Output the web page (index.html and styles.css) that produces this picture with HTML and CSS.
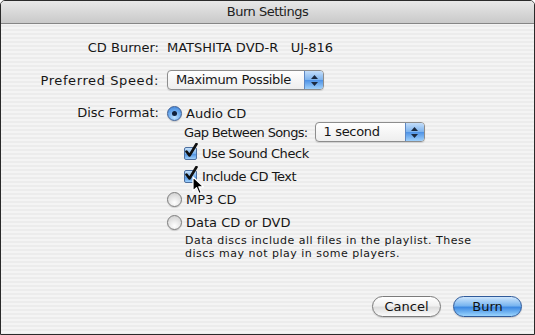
FILE: index.html
```html
<!DOCTYPE html>
<html lang="en">
<head>
    <meta charset="UTF-8">
    <meta name="viewport" content="width=device-width, initial-scale=1.0">
    <title>Burn Settings</title>
    <link rel="stylesheet" href="styles.css">
</head>
<body>
    <div class="window">
        <div class="titlebar">Burn Settings</div>

        <div class="content">
            <div class="row burner-row">
                <span class="label">CD Burner:</span>
                <span class="value">MATSHITA DVD-R   UJ-816</span>
            </div>

            <div class="row speed-row">
                <span class="label wide">Preferred Speed:</span>
                <div class="popup speed-popup">
                    <span class="popup-text">Maximum Possible</span>
                    <span class="popup-arrows">
                        <svg width="7" height="11" viewBox="0 0 7 11"><path d="M3.5 0 L7 4 L0 4 Z M0 7 L7 7 L3.5 11 Z" fill="#1b2a40"/></svg>
                    </span>
                </div>
            </div>

            <div class="row format-row">
                <span class="label">Disc Format:</span>
                <div class="options">
                    <div class="option first">
                        <span class="radio on"><span class="dot"></span></span>
                        <span>Audio CD</span>
                    </div>
                    <div class="sub">
                        <div class="gap-row">
                            <span>Gap Between Songs:</span>
                            <div class="popup gap-popup">
                                <span class="popup-text">1 second</span>
                                <span class="popup-arrows">
                                    <svg width="7" height="11" viewBox="0 0 7 11"><path d="M3.5 0 L7 4 L0 4 Z M0 7 L7 7 L3.5 11 Z" fill="#1b2a40"/></svg>
                                </span>
                            </div>
                        </div>
                        <div class="option">
                            <span class="checkbox">
                                <svg width="14" height="16" viewBox="0 0 14 16"><path d="M2.5 8.5 L5.5 12.5 L12.5 1" fill="none" stroke="#101010" stroke-width="2.6" stroke-linecap="round" stroke-linejoin="round"/></svg>
                            </span>
                            <span>Use Sound Check</span>
                        </div>
                        <div class="option cursor-row">
                            <span class="checkbox">
                                <svg width="14" height="16" viewBox="0 0 14 16"><path d="M2.5 8.5 L5.5 12.5 L12.5 1" fill="none" stroke="#101010" stroke-width="2.6" stroke-linecap="round" stroke-linejoin="round"/></svg>
                            </span>
                            <span>Include CD Text</span>
                            <svg class="cursor" width="13" height="19" viewBox="0 0 13 19"><path d="M1 1 L1 15 L4.5 11.6 L7 17.5 L9.2 16.5 L6.8 10.8 L11.5 10.8 Z" fill="#000" stroke="#fff" stroke-width="1.2" stroke-linejoin="round"/></svg>
                        </div>
                    </div>
                    <div class="option">
                        <span class="radio"></span>
                        <span>MP3 CD</span>
                    </div>
                    <div class="option">
                        <span class="radio"></span>
                        <span>Data CD or DVD</span>
                    </div>
                    <p class="note">Data discs include all files in the playlist. These<br>discs may not play in some players.</p>
                </div>
            </div>
        </div>

        <div class="buttons">
            <button class="btn">Cancel</button>
            <button class="btn default">Burn</button>
        </div>
    </div>
</body>
</html>
```

FILE: styles.css
```css
body {
    margin: 0;
    background: #fff;
    font-family: "DejaVu Sans", sans-serif;
    font-size: 13px;
    color: #161616;
}

.window {
    width: 535px;
    height: 335px;
    box-sizing: border-box;
    border: 1px solid #2a2a2a;
    border-radius: 5px 5px 0 0;
    background: repeating-linear-gradient(to bottom, #ececec 0, #ececec 2px, #f4f4f4 2px, #f4f4f4 4px);
    display: flex;
    flex-direction: column;
    overflow: hidden;
}

.titlebar {
    height: 22px;
    line-height: 22px;
    text-align: center;
    letter-spacing: -0.5px;
    background: linear-gradient(#e8e8e8, #c9c9c9);
    border-bottom: 1px solid #858585;
    color: #222;
}

.content {
    flex: 1;
    padding-top: 13px;
}

.row {
    display: flex;
    align-items: center;
    gap: 8px;
}

.label {
    width: 158px;
    flex: none;
    text-align: right;
}

.label.wide {
    letter-spacing: 0.6px;
}

.burner-row {
    height: 20px;
}

.value {
    white-space: pre;
}

.speed-row {
    margin-top: 13px;
    height: 20px;
}

.format-row {
    margin-top: 14px;
    align-items: flex-start;
}

.format-row .label {
    line-height: 18px;
}

/* popup menus */
.popup {
    display: flex;
    height: 20px;
    box-sizing: border-box;
    border: 1px solid #8d8d8d;
    border-radius: 4px;
    background: linear-gradient(#ffffff, #f6f6f6 50%, #eeeeee);
    overflow: hidden;
    box-shadow: 0 1px 1px rgba(0, 0, 0, 0.12);
}

.popup-text {
    flex: 1;
    padding-left: 8px;
    line-height: 18px;
    letter-spacing: -0.35px;
}

.popup-arrows {
    width: 18px;
    display: flex;
    align-items: center;
    justify-content: center;
    border-left: 1px solid #5e88c4;
    background: linear-gradient(#c4defa, #7fb4ee 48%, #4f93e6 52%, #9fd0fb);
}

.speed-popup {
    width: 157px;
}

.gap-popup {
    width: 110px;
}

/* options */
.options {
    display: flex;
    flex-direction: column;
}

.option {
    display: flex;
    align-items: center;
    gap: 4px;
    height: 23px;
}

.option.first {
    height: 18px;
}

.sub {
    padding-left: 17px;
    letter-spacing: -0.45px;
}

.sub .option {
    gap: 5px;
}

.gap-row {
    display: flex;
    align-items: center;
    gap: 7px;
    height: 20px;
    letter-spacing: -0.65px;
}

.radio {
    width: 15px;
    height: 15px;
    box-sizing: border-box;
    border-radius: 50%;
    border: 1px solid #7c7c7c;
    background: radial-gradient(circle at 50% 75%, #ffffff, #e0e0e0 60%, #c8c8c8);
    display: flex;
    align-items: center;
    justify-content: center;
    box-shadow: 0 1px 1px rgba(0, 0, 0, 0.15);
}

.radio.on {
    border-color: #3d5f94;
    background: radial-gradient(circle at 50% 80%, #bfe2ff, #6aa8ec 55%, #3b7fd6);
}

.dot {
    width: 5px;
    height: 5px;
    border-radius: 50%;
    background: #10203a;
}

.checkbox {
    position: relative;
    width: 13px;
    height: 13px;
    box-sizing: border-box;
    border: 1px solid #4d6f9f;
    border-radius: 2px;
    background: linear-gradient(#c8e2fb, #79b2ee 50%, #4f92e2 55%, #9fd0fb);
    flex: none;
}

.checkbox svg {
    position: absolute;
    left: -1px;
    top: -5px;
}

.cursor-row {
    position: relative;
}

.cursor {
    position: absolute;
    left: 8px;
    top: 11px;
}

.note {
    margin: 0 0 0 18px;
    font-size: 11px;
    line-height: 13px;
    letter-spacing: 0.5px;
}

/* buttons */
.buttons {
    display: flex;
    justify-content: flex-end;
    gap: 12px;
    padding: 0 12px 17px 0;
}

.btn {
    height: 21px;
    border-radius: 11px;
    border: 1px solid #7b7b7b;
    background: linear-gradient(#ffffff, #f1f1f1 45%, #dedede 55%, #fbfbfb);
    font-family: "DejaVu Sans", sans-serif;
    font-size: 13px;
    color: #111;
    padding: 0;
    width: 69px;
    box-shadow: 0 1px 1px rgba(0, 0, 0, 0.15);
}

.btn.default {
    border-color: #2f5a9a;
    background: linear-gradient(#cfe6fc, #7ab6f0 45%, #3f8be3 55%, #9ad4fd);
}
```
